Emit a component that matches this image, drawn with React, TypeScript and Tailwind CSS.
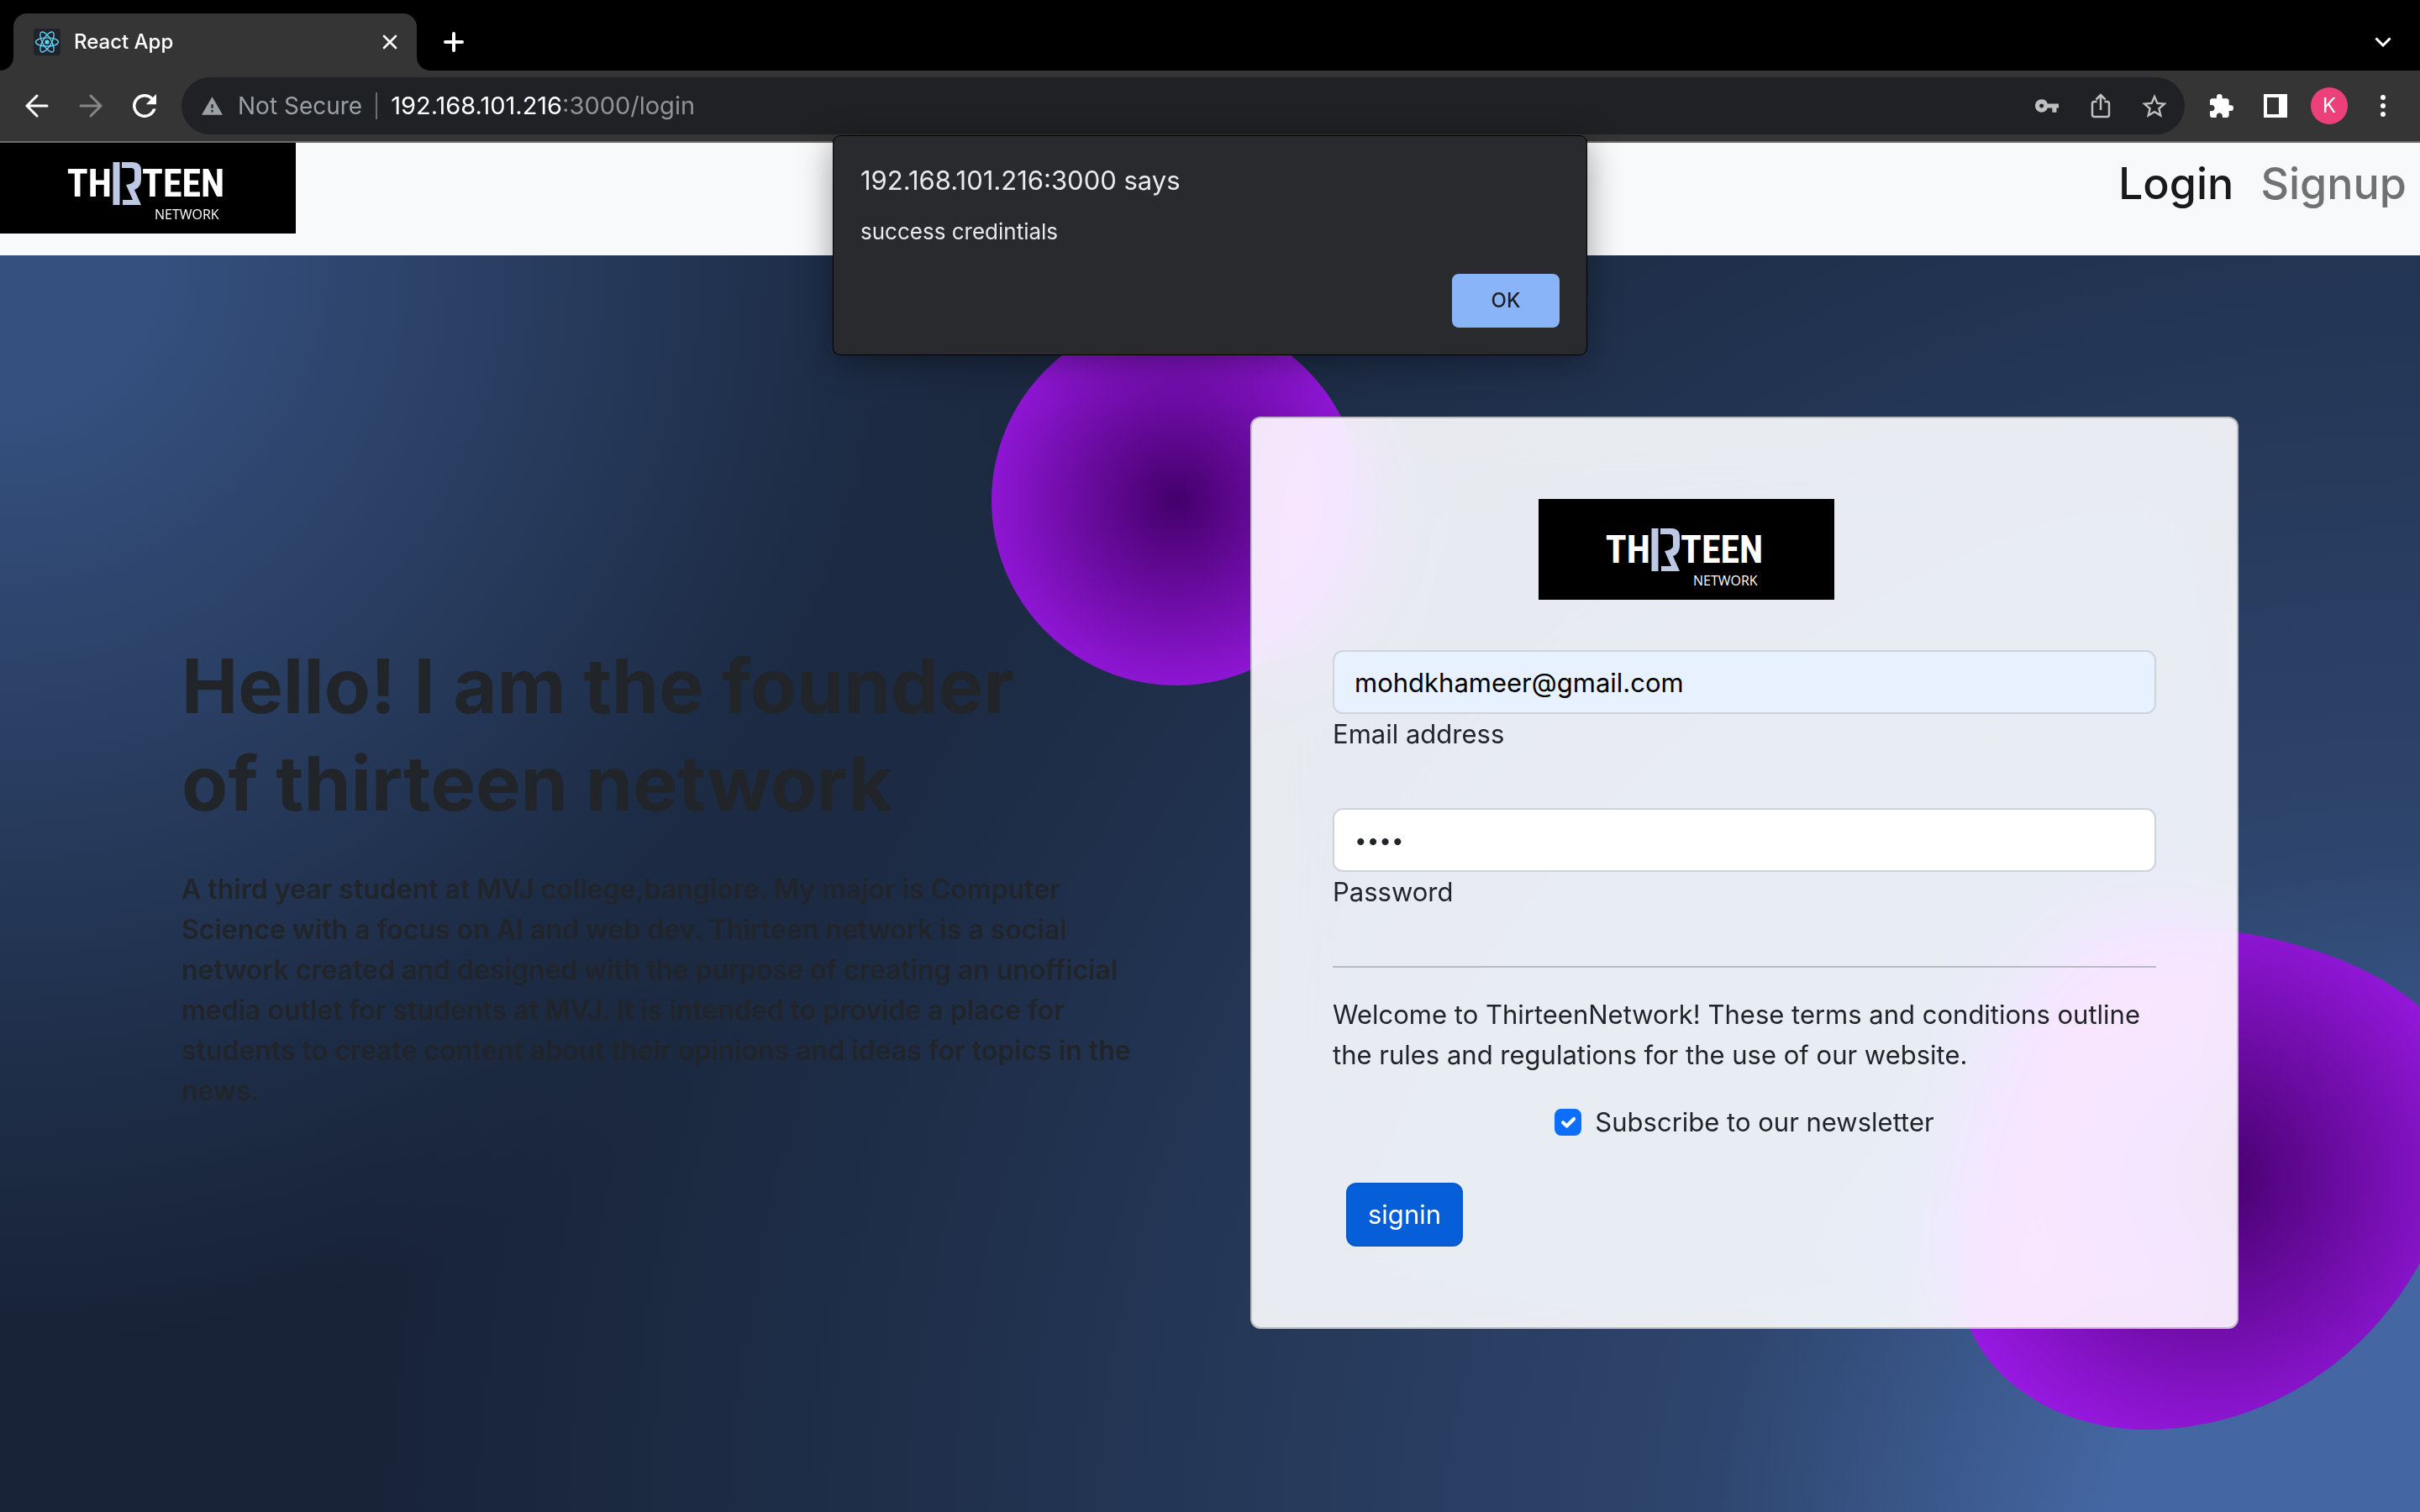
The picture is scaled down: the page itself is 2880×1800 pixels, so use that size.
import { useState } from "react";
import type { ReactNode } from "react";

function ThirteenLogo({ className, viewBox }: { className: string; viewBox: string }) {
  return (
    <svg className={className} viewBox={viewBox} role="img" aria-label="Thirteen Network">
      <rect x="0" y="-40" width="352" height="200" fill="#000" />
      <g fontFamily="'Roboto Condensed','Liberation Sans Narrow','Open Sans Condensed','DejaVu Sans Condensed','Liberation Sans',sans-serif" fontWeight="700" fontSize="46" fill="#fff">
        <text x="133" y="76" textAnchor="end">TH</text>
        <text x="169" y="76">TEEN</text>
      </g>
      <g fill="#bcc8e4">
        <path d="M134.500 35h8v51h-8z" />
        <path d="M145 35h13q10 0 10 10v10q0 10-8 13l8 18h-22v-6h12l-8-18q8-1 10-5v-11q0-4-4-4h-11z" />
      </g>
      <text x="184" y="103" fontFamily="'Open Sans',sans-serif" fontSize="16" fill="#fff">NETWORK</text>
    </svg>
  );
}

function ReactMark() {
  return (
    <svg viewBox="0 0 32 32" className="size-8">
      <rect width="32" height="32" rx="4" fill="#20232a" />
      <g fill="none" stroke="#61dafb" strokeWidth="1.300">
        <ellipse cx="16" cy="16" rx="13.500" ry="5.200" />
        <ellipse cx="16" cy="16" rx="13.500" ry="5.200" transform="rotate(60 16 16)" />
        <ellipse cx="16" cy="16" rx="13.500" ry="5.200" transform="rotate(120 16 16)" />
      </g>
      <circle cx="16" cy="16" r="2.600" fill="#61dafb" />
    </svg>
  );
}

function IconButton({ label, children, className = "" }: { label: string; children: ReactNode; className?: string }) {
  return (
    <button type="button" aria-label={label} className={`flex size-16 shrink-0 items-center justify-center ${className}`}>
      {children}
    </button>
  );
}

function TabStrip() {
  return (
    <div className="flex h-[84px] items-end bg-black pl-4">
      <div className="relative flex h-[68px] w-[480px] items-center gap-4 rounded-t-[16px] bg-[#353535] pr-5 pl-6">
        <svg viewBox="0 0 16 16" className="absolute bottom-0 -left-4 size-4">
          <path d="M16 0v16H0A16 16 0 0 0 16 0z" fill="#353535" />
        </svg>
        <svg viewBox="0 0 16 16" className="absolute -right-4 bottom-0 size-4">
          <path d="M0 0v16h16A16 16 0 0 1 0 0z" fill="#353535" />
        </svg>
        <ReactMark />
        <span className="grow text-2xl font-medium">React App</span>
        <button type="button" aria-label="Close tab" className="flex size-6 items-center justify-center">
          <svg viewBox="0 0 18 18" className="size-[18px]" stroke="currentColor" strokeWidth="2.600" strokeLinecap="round">
            <path d="M2 2l14 14M16 2L2 16" />
          </svg>
        </button>
      </div>
      <button type="button" aria-label="New tab" className="ml-5 flex h-[68px] w-12 items-center justify-center">
        <svg viewBox="0 0 24 24" className="size-6" stroke="currentColor" strokeWidth="4" strokeLinecap="round">
          <path d="M12 2v20M2 12h20" />
        </svg>
      </button>
      <button type="button" aria-label="Search tabs" className="mr-5 ml-auto flex h-[68px] w-12 items-center justify-center">
        <svg viewBox="0 0 20 12" className="h-3 w-5" fill="none" stroke="currentColor" strokeWidth="3">
          <path d="M1.500 1.500L10 10l8.500-8.500" />
        </svg>
      </button>
    </div>
  );
}

function Toolbar() {
  return (
    <div className="flex h-[86px] items-center border-b-2 border-[#6b6b6b] bg-[#353535] pr-3 pl-3">
      <IconButton label="Back">
        <svg viewBox="0 0 28 28" className="size-7" fill="none" stroke="currentColor" strokeWidth="3" strokeLinecap="round">
          <path d="M26 14H3M14 2L2 14l12 12" />
        </svg>
      </IconButton>
      <IconButton label="Forward" className="text-[#868686]">
        <svg viewBox="0 0 28 28" className="size-7" fill="none" stroke="currentColor" strokeWidth="3" strokeLinecap="round">
          <path d="M2 14h23M14 2l12 12-12 12" />
        </svg>
      </IconButton>
      <IconButton label="Reload">
        <svg viewBox="4 4 16 16" className="size-7" fill="currentColor">
          <path d="M17.650 6.350A7.960 7.960 0 0 0 12 4a8 8 0 1 0 7.730 10h-2.080A6 6 0 1 1 12 6c1.660 0 3.140.690 4.220 1.780L13 11h7V4l-2.350 2.350z" />
        </svg>
      </IconButton>
      <div className="ml-3 flex h-[68px] grow items-center rounded-full bg-[#202124] pr-1 pl-6">
        <svg viewBox="1 2 22 19" className="h-[22px] w-[25px]" fill="#9aa0a6">
          <path d="M1 21h22L12 2 1 21zm12-3h-2v-2h2v2zm0-4h-2v-4h2v4z" />
        </svg>
        <span className="ml-[18px] text-[28px] text-[#9aa0a6]">Not Secure</span>
        <span className="mx-4 h-8 w-[2px] bg-[#6b6e72]" />
        <span className="grow text-[29px] text-[#929395]">
          <span className="text-white">192.168.101.216</span>:3000/login
        </span>
        <div className="flex text-[#c0c0c0]">
          <IconButton label="Passwords">
            <svg viewBox="1 6 22 12" className="h-4 w-7" fill="currentColor">
              <path d="M12.650 10A5.990 5.990 0 0 0 7 6c-3.310 0-6 2.690-6 6s2.690 6 6 6a5.990 5.990 0 0 0 5.650-4H17v4h4v-4h2v-4H12.650zM7 14c-1.100 0-2-.900-2-2s.900-2 2-2 2 .900 2 2-.900 2-2 2z" />
            </svg>
          </IconButton>
          <IconButton label="Share">
            <svg viewBox="0 0 24 30" className="h-[30px] w-6" fill="none" stroke="currentColor" strokeWidth="2.500">
              <path d="M7.500 10H4.500Q2 10 2 12.500v13Q2 28 4.500 28h15Q22 28 22 25.500v-13Q22 10 19.500 10h-3M12 20V3M6.500 7.500L12 2l5.500 5.500" />
            </svg>
          </IconButton>
          <IconButton label="Bookmark this page">
            <svg viewBox="2 2 20 19" className="h-7 w-[30px]" fill="currentColor">
              <path d="M22 9.240l-7.190-.620L12 2 9.190 8.630 2 9.240l5.460 4.730L5.820 21 12 17.270 18.180 21l-1.630-7.030L22 9.240zM12 15.400l-3.760 2.270 1-4.280-3.320-2.880 4.380-.380L12 6.100l1.710 4.040 4.380.380-3.320 2.880 1 4.280L12 15.400z" />
            </svg>
          </IconButton>
        </div>
      </div>
      <div className="ml-3 flex">
        <IconButton label="Extensions">
          <svg viewBox="2 1 21 21" className="size-7" fill="currentColor">
            <path d="M20.500 11H19V7c0-1.100-.900-2-2-2h-4V3.500a2.500 2.500 0 0 0-5 0V5H4c-1.100 0-1.990.900-1.990 2v3.800H3.500c1.490 0 2.700 1.210 2.700 2.700s-1.210 2.700-2.700 2.700H2V20c0 1.100.900 2 2 2h3.800v-1.500c0-1.490 1.210-2.700 2.700-2.700s2.700 1.210 2.700 2.700V22H17c1.100 0 2-.900 2-2v-4h1.500a2.500 2.500 0 0 0 0-5z" />
          </svg>
        </IconButton>
        <IconButton label="Side panel">
          <svg viewBox="0 0 28 28" className="size-7" fill="currentColor" fillRule="evenodd">
            <path d="M0 0h28v28H0zM4 4v20h14V4z" />
          </svg>
        </IconButton>
        <IconButton label="Profile">
          <span className="flex size-11 items-center justify-center rounded-full bg-[#ec407a] text-2xl">K</span>
        </IconButton>
        <IconButton label="Menu">
          <svg viewBox="0 0 6 26" className="h-[26px] w-[6px]" fill="currentColor">
            <circle cx="3" cy="3" r="3" />
            <circle cx="3" cy="13" r="3" />
            <circle cx="3" cy="23" r="3" />
          </svg>
        </IconButton>
      </div>
    </div>
  );
}

function AlertDialog() {
  return (
    <div
      role="alertdialog"
      aria-labelledby="alert-title"
      aria-describedby="alert-text"
      className="absolute top-[162px] left-1/2 z-20 flex w-[896px] -translate-x-1/2 flex-col rounded-lg bg-[#292a2d] px-8 pt-8 pb-8 text-[#e8eaed] shadow-[0_0_0_1px_#000,0_8px_40px_rgba(0,0,0,0.4)]"
    >
      <h2 id="alert-title" className="text-[31px] leading-[42px]">192.168.101.216:3000 says</h2>
      <p id="alert-text" className="mt-5 text-[26px] leading-10">success credintials</p>
      <button type="button" className="mt-[30px] h-16 w-32 self-end rounded-lg bg-[#8ab4f8] text-2xl font-medium text-[#202124]">OK</button>
    </div>
  );
}

function Navbar() {
  return (
    <nav className="flex h-[134px] items-start justify-between bg-[#f8f9fa]">
      <a href="#home">
        <ThirteenLogo className="h-[108px] w-[352px]" viewBox="0 12 352 108" />
      </a>
      <div className="flex gap-8 pt-3 pr-4 text-[52px] leading-[74px] font-medium">
        <a href="#login" className="text-[#191a1a]">Login</a>
        <a href="#signup" className="text-[#707171]">Signup</a>
      </div>
    </nav>
  );
}

const fieldClass = "h-[76px] w-full rounded-xl border-2 border-[#ced4da] px-6";

function LoginCard() {
  const [email, setEmail] = useState("mohdkhameer@gmail.com");
  const [password, setPassword] = useState("1234");
  const [subscribed, setSubscribed] = useState(true);
  return (
    <form className="relative flex flex-col rounded-xl border-2 border-black/20 bg-white/90 px-24 pt-24 pb-24 text-[31px] leading-12 backdrop-blur-[50px] backdrop-saturate-200">
      <ThirteenLogo className="ml-[245px] h-[120px] w-[352px]" viewBox="0 0 352 120" />
      <input id="email" type="email" value={email} onChange={(e) => setEmail(e.target.value)} className={`mt-15 bg-[#e7f1ff] text-black ${fieldClass}`} />
      <label htmlFor="email" className="self-start">Email address</label>
      <input id="password" type="password" value={password} onChange={(e) => setPassword(e.target.value)} className={`mt-16 bg-white text-[26px] ${fieldClass}`} />
      <label htmlFor="password" className="self-start">Password</label>
      <hr className="mt-16 mb-8 border-t-2 border-[#b9bbc3]" />
      <p>Welcome to ThirteenNetwork! These terms and conditions outline the rules and regulations for the use of our website.</p>
      <label className="mt-8 flex items-center justify-center gap-4">
        <span className="grid size-8 place-items-center">
          <input
            type="checkbox"
            checked={subscribed}
            onChange={(e) => setSubscribed(e.target.checked)}
            className="col-start-1 row-start-1 size-8 appearance-none rounded-lg border-2 border-[#ced4da] bg-white checked:border-[#0d6efd] checked:bg-[#0d6efd]"
          />
          {subscribed && (
            <svg viewBox="0 0 20 20" className="pointer-events-none z-10 col-start-1 row-start-1 size-8" fill="none" stroke="#fff" strokeWidth="2.600" strokeLinecap="round" strokeLinejoin="round">
              <path d="M6.300 10.200l2.800 2.600 5.300-5.300" />
            </svg>
          )}
        </span>
        Subscribe to our newsletter
      </label>
      <button type="button" className="mt-12 ml-4 h-[76px] self-start rounded-xl border-2 border-[#0a58ca] bg-[#065fd8] px-6 text-white">signin</button>
    </form>
  );
}

function Hero() {
  return (
    <main className="flex grow flex-col overflow-hidden bg-[#172236] bg-[radial-gradient(1300px_circle_at_0%_0%,hsl(218,41%,35%)_15%,hsl(218,41%,30%)_35%,hsl(218,41%,20%)_75%,hsl(218,41%,19%)_80%,transparent_100%),radial-gradient(2500px_circle_at_100%_105%,hsl(218,41%,45%)_15%,hsl(218,41%,30%)_35%,hsl(218,41%,20%)_75%,hsl(218,41%,19%)_80%,transparent_100%)]">
      <div className="grid grid-cols-2 items-center px-48 pt-48 text-[#212529]">
        <section className="pr-18 pl-6">
          <h1 className="pt-1 text-[90px] leading-[116px] font-bold">
            Hello! I am the founder
            <br />
            of thirteen network
          </h1>
          <p className="mt-11 text-[32px] leading-12 font-semibold">
            A third year student at MVJ college,banglore. My major is Computer Science with a focus on AI and web dev. Thirteen network is a social network created and designed with the purpose of creating an unofficial media outlet for students at MVJ. It is intended to provide a place for students to create content about their opinions and ideas for topics in the news.
          </p>
        </section>
        <section className="relative pr-6 pl-12">
          <div className="absolute -top-[120px] -left-[260px] size-[440px] rounded-full bg-[radial-gradient(#44006b,#ad1fff)]" />
          <div className="absolute -right-[244px] -bottom-[120px] size-[600px] rounded-[38%_62%_63%_37%/70%_33%_67%_30%] bg-[radial-gradient(#44006b,#ad1fff)]" />
          <LoginCard />
        </section>
      </div>
    </main>
  );
}

export default function App() {
  return (
    <div className="relative flex min-h-screen flex-col font-['Inter',sans-serif]">
      <header className="text-white">
        <TabStrip />
        <Toolbar />
      </header>
      <AlertDialog />
      <Navbar />
      <Hero />
    </div>
  );
}
